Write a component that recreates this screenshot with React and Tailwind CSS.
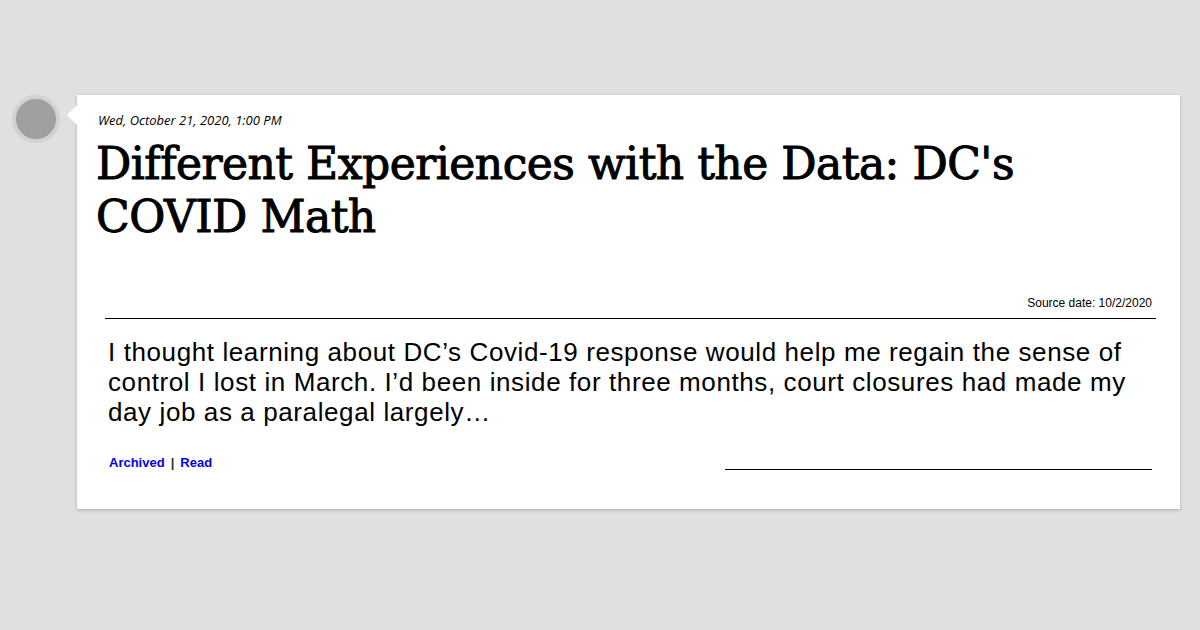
const App = () => {
  return (
    <div className="w-[1200px] h-[630px] bg-[#e0e0e0] overflow-hidden">
      <div className="flex pt-[95px]">
        {/* avatar + pointer */}
        <div className="w-[77px] relative shrink-0">
          <div className="absolute left-[12px] top-0 w-[48px] h-[48px] rounded-full bg-[#a0a0a0] border-[4px] border-[#d2d2d2]" />
          <div className="absolute right-0 top-[10px] w-0 h-0 border-y-[10px] border-y-transparent border-r-[10px] border-r-white" />
        </div>

        <div className="w-[1103px] h-[414px] bg-white shadow-[0_1px_3px_rgba(0,0,0,0.25)] flex flex-col">
          <div className="pl-[21px] pt-[16px] text-[13px] leading-[18px] italic text-black font-['Open_Sans',sans-serif]">
            Wed, October 21, 2020, 1:00 PM
          </div>
          <h1 className="pl-[19px] pr-[100px] mt-[8px] text-[44px] leading-[53px] text-black font-['DejaVu_Serif',serif] tracking-[-0.5px] [-webkit-text-stroke:1px_black]">
            Different Experiences with the Data: DC's COVID Math
          </h1>

          <div className="mt-[53px] ml-[28px] mr-[24px] flex flex-col">
            <div className="text-right text-[12px] leading-[14px] text-black font-['Liberation_Sans',Arial,sans-serif] pr-[4px]">
              Source date: 10/2/2020
            </div>
            <div className="mt-[8px] border-t border-black" />
          </div>

          <p className="mt-[18px] ml-[31px] mr-[40px] text-[26px] leading-[30px] tracking-[0.6px] text-black font-['Liberation_Sans',Arial,sans-serif]">
            I thought learning about DC’s Covid-19 response would help me regain the sense of control I lost in March. I’d been inside for three months, court closures had made my day job as a paralegal largely…
          </p>

          <div className="mt-[28px] ml-[32px] mr-[28px] flex items-end">
            <div className="text-[13px] leading-[16px] font-bold font-['Liberation_Sans',Arial,sans-serif] flex items-center gap-[6px]">
              <span className="text-[#0000ee]">Archived</span>
              <span className="text-[#333]">|</span>
              <span className="text-[#0000ee]">Read</span>
            </div>
            <div className="ml-auto w-[427px] border-t border-black mb-[1px]" />
          </div>
        </div>
      </div>
    </div>
  );
};

export default App;
